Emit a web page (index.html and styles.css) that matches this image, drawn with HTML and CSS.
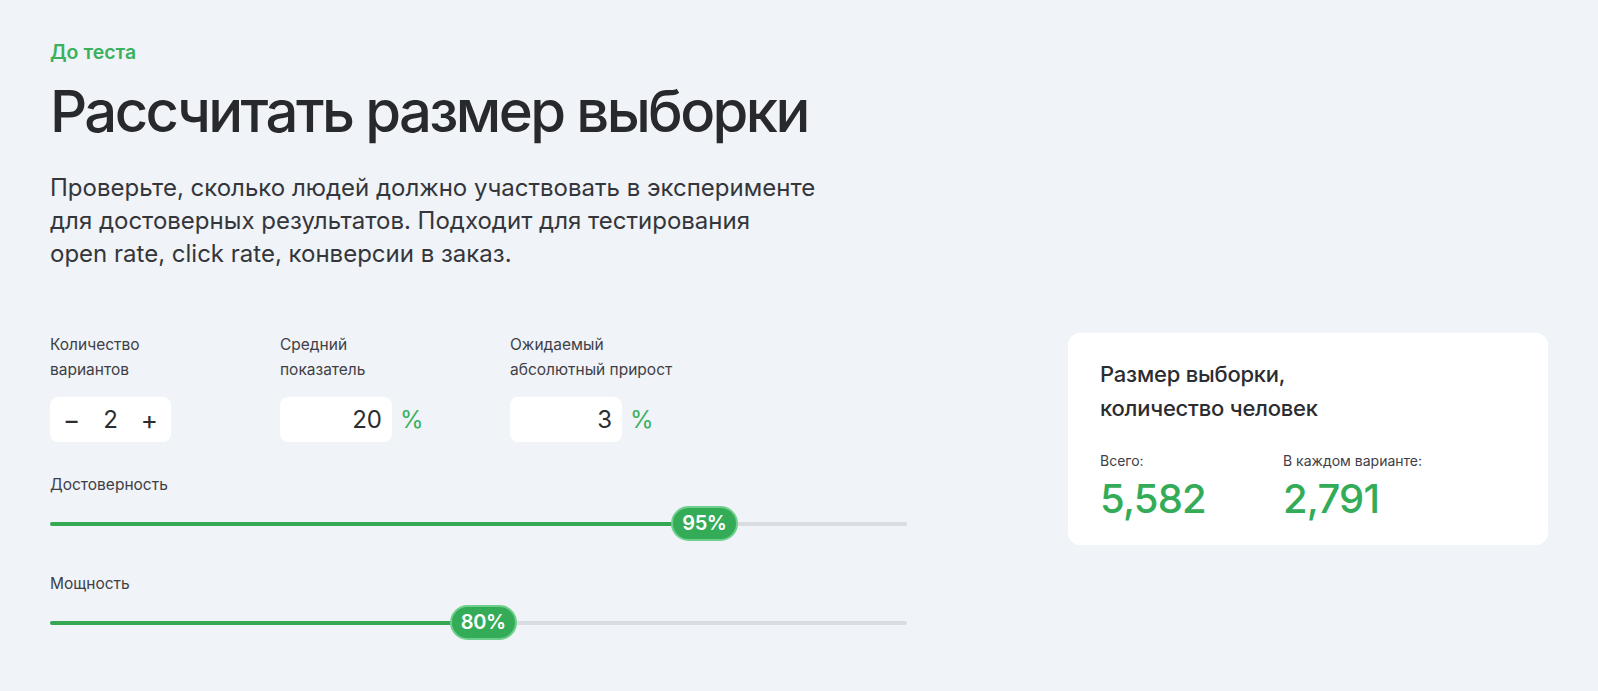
FILE: index.html
```html
<!DOCTYPE html>
<html lang="ru">
<head>
    <meta charset="UTF-8">
    <meta name="viewport" content="width=device-width, initial-scale=1.0">
    <title>Рассчитать размер выборки</title>
    <link rel="stylesheet" href="styles.css">
</head>
<body>
    <div class="page">
        <div class="eyebrow">До теста</div>
        <h1 class="title">Рассчитать размер выборки</h1>
        <p class="lead">Проверьте, сколько людей должно участвовать в эксперименте<br>для достоверных результатов. Подходит для тестирования<br>open rate, click rate, конверсии в заказ.</p>

        <div class="calc">
            <div class="controls">
                <div class="fields">
                    <div class="field">
                        <div class="field-label">Количество<br>вариантов</div>
                        <div class="stepper">
                            <button class="step-btn">−</button>
                            <span class="step-value">2</span>
                            <button class="step-btn">+</button>
                        </div>
                    </div>
                    <div class="field">
                        <div class="field-label">Средний<br>показатель</div>
                        <div class="input-row">
                            <input type="text" class="num-input" value="20">
                            <span class="unit">%</span>
                        </div>
                    </div>
                    <div class="field">
                        <div class="field-label">Ожидаемый<br>абсолютный прирост</div>
                        <div class="input-row">
                            <input type="text" class="num-input" value="3">
                            <span class="unit">%</span>
                        </div>
                    </div>
                </div>

                <div class="slider-block">
                    <div class="field-label">Достоверность</div>
                    <div class="slider">
                        <div class="track"></div>
                        <div class="track-fill" style="width: 76.3%"></div>
                        <div class="thumb" style="left: 76.3%">95%</div>
                    </div>
                </div>

                <div class="slider-block">
                    <div class="field-label">Мощность</div>
                    <div class="slider">
                        <div class="track"></div>
                        <div class="track-fill" style="width: 50.5%"></div>
                        <div class="thumb" style="left: 50.5%">80%</div>
                    </div>
                </div>
            </div>

            <div class="result-card">
                <div class="result-title">Размер выборки,<br>количество человек</div>
                <div class="result-row">
                    <div class="result-col result-col-first">
                        <div class="result-label">Всего:</div>
                        <div class="result-value">5,582</div>
                    </div>
                    <div class="result-col">
                        <div class="result-label">В каждом варианте:</div>
                        <div class="result-value">2,791</div>
                    </div>
                </div>
            </div>
        </div>
    </div>
</body>
</html>
```

FILE: styles.css
```css
body {
    margin: 0;
    background-color: #F0F3F7;
    color: #2B2D31;
    font-family: Inter, "Noto Sans", sans-serif;
}
.page {
    padding: 38px 50px 40px;
}
.eyebrow {
    color: #3BB15F;
    font-size: 19.5px;
    font-weight: 600;
    line-height: 28px;
}
.title {
    margin: 10px 0 0;
    font-size: 58px;
    font-weight: 500;
    line-height: 70px;
    letter-spacing: -0.045em;
    color: #27292D;
}
.lead {
    margin: 25px 0 0;
    font-size: 24px;
    line-height: 33px;
    color: #34363B;
}
.calc {
    display: flex;
    justify-content: space-between;
    align-items: flex-start;
    margin-top: 62px;
}
.controls {
    width: 857px;
}
.fields {
    display: flex;
}
.field {
    width: 230px;
}
.field-label {
    font-size: 15.5px;
    line-height: 25px;
    color: #3E4046;
}
.stepper {
    display: flex;
    align-items: center;
    justify-content: space-between;
    width: 121px;
    height: 45px;
    margin-top: 15px;
    padding: 0 10px;
    box-sizing: border-box;
    background-color: white;
    border-radius: 8px;
}
.step-btn {
    border: none;
    background: none;
    padding: 0 3px;
    font-family: inherit;
    font-size: 26px;
    line-height: 45px;
    color: #2B2D31;
    cursor: pointer;
}
.step-value {
    font-size: 24px;
    color: #2B2D31;
}
.input-row {
    display: flex;
    align-items: center;
    margin-top: 15px;
}
.num-input {
    width: 112px;
    height: 45px;
    box-sizing: border-box;
    border: none;
    border-radius: 8px;
    background-color: white;
    padding: 0 10px;
    text-align: right;
    font-family: inherit;
    font-size: 24px;
    color: #2B2D31;
}
.unit {
    margin-left: 8px;
    font-size: 24px;
    color: #3BB15F;
}
.slider-block {
    margin-top: 30px;
}
.slider {
    position: relative;
    height: 35px;
    margin-top: 9px;
}
.track, .track-fill {
    position: absolute;
    left: 0;
    top: 16px;
    height: 4px;
    border-radius: 2px;
}
.track {
    right: 0;
    background-color: #D9DCE1;
}
.track-fill {
    background-color: #34A853;
}
.thumb {
    position: absolute;
    top: 0;
    width: 67px;
    height: 35px;
    margin-left: -33px;
    box-sizing: border-box;
    border: 2px solid #6FD08E;
    border-radius: 18px;
    background-color: #34AC57;
    color: white;
    font-size: 20px;
    font-weight: 600;
    line-height: 31px;
    text-align: center;
    letter-spacing: -0.02em;
}
.result-card {
    width: 480px;
    box-sizing: border-box;
    background-color: white;
    border-radius: 12px;
    padding: 24px 32px 22px;
    margin-top: 1px;
}
.result-title {
    font-size: 22px;
    font-weight: 500;
    line-height: 34px;
    color: #2B2D31;
    letter-spacing: -0.01em;
}
.result-row {
    display: flex;
    margin-top: 25px;
}
.result-col-first {
    width: 183px;
}
.result-label {
    font-size: 14px;
    line-height: 22px;
    color: #3E4046;
}
.result-value {
    margin-top: 3px;
    font-size: 40px;
    font-weight: 500;
    line-height: 48px;
    color: #34AC57;
    letter-spacing: -0.02em;
}
```
